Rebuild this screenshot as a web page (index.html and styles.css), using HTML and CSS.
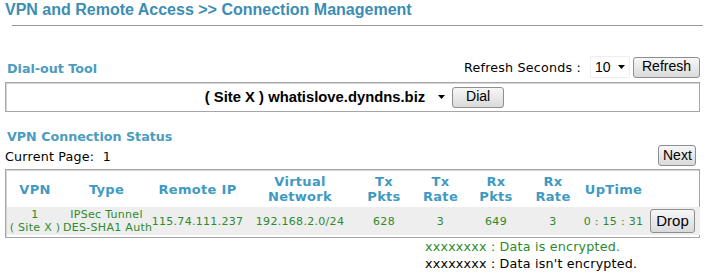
FILE: index.html
```html
<!DOCTYPE html>
<html lang="en">
<head>
    <meta charset="UTF-8">
    <title>Connection Management</title>
    <link rel="stylesheet" href="styles.css">
</head>
<body>
    <h1 class="title">VPN and Remote Access &gt;&gt; Connection Management</h1>
    <hr class="rule">

    <div class="bar dial-bar">
        <h2 class="section">Dial-out Tool</h2>
        <div class="refresh">
            <span class="label">Refresh Seconds :</span>
            <span class="pick small">10 <svg width="7" height="4" viewBox="0 0 7 4"><path d="M0 0H7L3.5 4Z" fill="#000"/></svg></span>
            <button class="btn refresh-btn">Refresh</button>
        </div>
    </div>
    <div class="box dial-box">
        <span class="pick big">( Site X ) whatislove.dyndns.biz <svg width="7" height="4" viewBox="0 0 7 4"><path d="M0 0H7L3.5 4Z" fill="#000"/></svg></span>
        <button class="btn dial">Dial</button>
    </div>

    <h2 class="section status">VPN Connection Status</h2>
    <div class="bar page-bar">
        <span class="label">Current Page:&nbsp; 1</span>
        <button class="btn next">Next</button>
    </div>
    <div class="box table-box">
        <table class="status-table">
            <colgroup>
                <col style="width: 56px">
                <col style="width: 87px">
                <col style="width: 95px">
                <col style="width: 110px">
                <col style="width: 58px">
                <col style="width: 55px">
                <col style="width: 56px">
                <col style="width: 58px">
                <col style="width: 63px">
                <col style="width: 55px">
            </colgroup>
            <thead>
                <tr>
                    <th>VPN</th>
                    <th>Type</th>
                    <th>Remote IP</th>
                    <th>Virtual<br>Network</th>
                    <th>Tx<br>Pkts</th>
                    <th>Tx<br>Rate</th>
                    <th>Rx<br>Pkts</th>
                    <th>Rx<br>Rate</th>
                    <th>UpTime</th>
                    <th></th>
                </tr>
            </thead>
            <tbody>
                <tr class="row">
                    <td>1<br>( Site X )</td>
                    <td>IPSec Tunnel<br>DES-SHA1 Auth</td>
                    <td>115.74.111.237</td>
                    <td>192.168.2.0/24</td>
                    <td>628</td>
                    <td>3</td>
                    <td>649</td>
                    <td>3</td>
                    <td class="up">0 : 15 : 31</td>
                    <td><button class="btn drop">Drop</button></td>
                </tr>
            </tbody>
        </table>
    </div>

    <div class="legend">
        <p class="enc">xxxxxxxx : Data is encrypted.</p>
        <p>xxxxxxxx : Data isn't encrypted.</p>
    </div>
</body>
</html>
```

FILE: styles.css
```css
body {
    margin: 0;
    padding: 0 5px;
    font-family: "DejaVu Sans", Verdana, sans-serif;
    font-size: 12.7px;
    color: #000;
    background-color: #fff;
}
.title {
    font-family: "Liberation Sans", Arial, sans-serif;
    font-size: 16px;
    font-weight: bold;
    color: #3b8db4;
    margin: 0;
    padding-top: 1px;
    line-height: 18px;
}
.rule {
    border: 0;
    border-top: 1px solid #9a9a9a;
    margin: 6px 0 0 7px;
    height: 0;
}
.section {
    font-size: 12.7px;
    line-height: 15px;
    font-weight: bold;
    color: #4a9cc0;
    margin: 0;
    padding-left: 2px;
}
.bar {
    display: flex;
    justify-content: space-between;
    align-items: flex-end;
}
.dial-bar {
    margin-top: 30px;
    height: 23px;
    padding-right: 3px;
}
.dial-bar .section {
    padding-bottom: 3px;
}
.refresh {
    display: flex;
    align-items: center;
    gap: 3px;
    padding-bottom: 1px;
}
.refresh .label {
    margin-right: 6px;
    letter-spacing: 0.2px;
}
.btn {
    font-family: "Liberation Sans", Arial, sans-serif;
    font-size: 14px;
    color: #000;
    background: linear-gradient(#f7f7f7, #dadada);
    border: 1px solid #8e8e8e;
    border-radius: 3px;
    padding: 0 4px 1px;
    height: 21px;
    line-height: 17px;
}
.refresh-btn {
    width: 67px;
}
.pick {
    display: inline-flex;
    align-items: center;
    background-color: #fff;
    font-family: "Liberation Sans", Arial, sans-serif;
}
.pick svg {
    margin-left: 9px;
}
.pick.small {
    font-size: 14px;
    padding: 0 4px;
    height: 20px;
    width: 30px;
    justify-content: space-between;
    border: 1px solid #eeeeee;
}
.pick.small svg {
    margin-left: 6px;
}
.pick.big {
    font-size: 14.8px;
    font-weight: bold;
    height: 22px;
    padding: 0 4px;
}
.pick.big svg {
    margin-left: 13px;
}
.box {
    border: 1px solid #a6a6a6;
    box-shadow: inset 1px 1px 0 #d6d6d6;
}
.dial-box {
    display: flex;
    justify-content: center;
    align-items: center;
    gap: 3px;
    height: 28px;
    margin-top: 3px;
    margin-right: 3px;
}
.dial {
    width: 52px;
}
.status {
    margin-top: 17px;
}
.page-bar {
    height: 25px;
    padding-right: 7px;
    padding-bottom: 3px;
    box-sizing: border-box;
}
.page-bar .label {
    letter-spacing: 0.2px;
    line-height: 15px;
    padding-bottom: 2px;
}
.next {
    width: 38px;
}
.table-box {
    margin-right: 3px;
    padding: 1px 2px 2px 1px;
}
.status-table {
    width: 100%;
    table-layout: fixed;
    border-collapse: collapse;
}
.status-table th {
    font-size: 13px;
    letter-spacing: 0.3px;
    font-weight: bold;
    color: #3f9ac3;
    height: 36px;
    padding: 0;
    line-height: 15px;
}
.status-table td {
    font-size: 11px;
    letter-spacing: 0.3px;
    color: #2c8a2c;
    text-align: center;
    padding: 0;
    height: 28px;
    line-height: 13px;
    white-space: nowrap;
    background-color: #eeeeee;
}
.drop {
    font-size: 15px;
    height: 24px;
    width: 45px;
}
.legend {
    padding-left: 420px;
}
.legend p {
    margin: 0;
    font-size: 12.7px;
    line-height: 17px;
    letter-spacing: 0.2px;
}
.legend .enc {
    color: #2c8a2c;
}
```
